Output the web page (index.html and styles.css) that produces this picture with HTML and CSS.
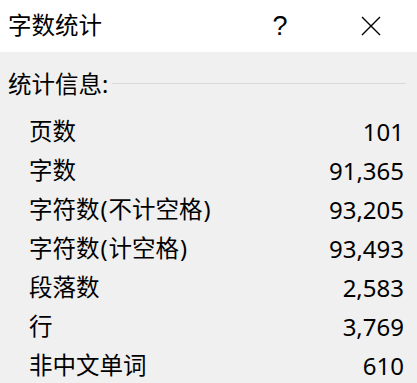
FILE: index.html
```html
<!DOCTYPE html>
<html lang="zh-CN">
<head>
<meta charset="utf-8">
<title>字数统计</title>
<link rel="stylesheet" href="styles.css">
</head>
<body>
<div class="dialog">
  <div class="titlebar">
    <div class="title">字数统计</div>
    <div class="help">?</div>
    <div class="close">
      <svg width="20" height="20" viewBox="0 0 20 20"><path d="M1 1 L19 19 M19 1 L1 19" stroke="#000" stroke-width="1.4" fill="none"/></svg>
    </div>
  </div>
  <div class="content">
    <div class="section">
      <span class="section-label">统计信息:</span>
      <span class="section-line"></span>
    </div>
    <div class="stats">
      <div class="row"><span>页数</span><span class="num">101</span></div>
      <div class="row"><span>字数</span><span class="num">91,365</span></div>
      <div class="row"><span>字符数<span class="paren">(</span>不计空格<span class="paren">)</span></span><span class="num">93,205</span></div>
      <div class="row"><span>字符数<span class="paren">(</span>计空格<span class="paren">)</span></span><span class="num">93,493</span></div>
      <div class="row"><span>段落数</span><span class="num">2,583</span></div>
      <div class="row"><span>行</span><span class="num">3,769</span></div>
      <div class="row"><span>非中文单词</span><span class="num">610</span></div>
    </div>
  </div>
</div>
</body>
</html>
```
FILE: styles.css
```css
html, body {
  margin: 0;
  padding: 0;
  background: #f0f0f0;
}
body {
  font-family: "Noto Sans", "Noto Sans CJK SC", sans-serif;
  font-size: 23.5px;
  color: #000;
}
.dialog {
  width: 417px;
  height: 383px;
  overflow: hidden;
}
.titlebar {
  height: 52px;
  background: #fff;
  display: flex;
  align-items: center;
  padding-left: 8px;
}
.title {
  flex: 1;
  line-height: 1;
}
.help {
  width: 22px;
  margin-right: 70px;
  text-align: center;
  font-family: "Liberation Sans", sans-serif;
  font-size: 27px;
  line-height: 1;
}
.close {
  width: 20px;
  height: 20px;
  margin-right: 36px;
  display: flex;
}
.content {
  padding-top: 13px;
}
.section {
  height: 39px;
  display: flex;
  align-items: center;
  padding-left: 8px;
  padding-right: 11px;
}
.section-label {
  line-height: 1;
}
.section-line {
  flex: 1;
  height: 1px;
  background: #d9d9d9;
  margin-left: 4px;
  margin-top: -2px;
}
.stats {
  margin-top: 8px;
  padding-left: 29px;
  padding-right: 13px;
}
.row {
  height: 39px;
  display: flex;
  align-items: center;
  justify-content: space-between;
  line-height: 1;
}
.paren {
  margin: 0 1px;
}
.num {
  font-size: 24px;
}
```
